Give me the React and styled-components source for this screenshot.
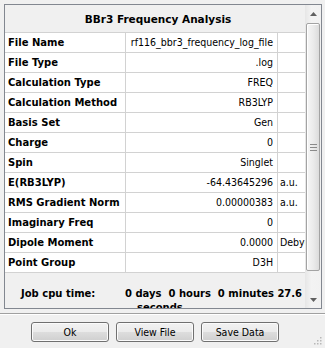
import React from 'react';
import styled, { createGlobalStyle } from 'styled-components';

const GlobalStyle = createGlobalStyle`
  html, body { margin: 0; padding: 0; background: #f0f0f0; }
  body { font-family: "DejaVu Sans", sans-serif; color: #000; }
`;

const Window = styled.div`
  position: relative;
  width: 325px;
  height: 348px;
  box-sizing: border-box;
  padding-top: 4px;
  background: #f0f0f0;
  display: flex;
  flex-direction: column;
  overflow: hidden;
`;

const Frame = styled.div`
  margin-left: 4px;
  width: 318px;
  height: 305px;
  box-sizing: border-box;
  border: 1px solid #828790;
  display: flex;
  background: #f0f0f0;
  flex-shrink: 0;
`;

const Content = styled.div`
  flex: 1;
  min-width: 0;
  display: flex;
  flex-direction: column;
  overflow: hidden;
`;

const Title = styled.div`
  height: 27px;
  flex-shrink: 0;
  border-bottom: 1px solid #d2d2d2;
  display: flex;
  align-items: center;
  justify-content: center;
  padding-left: 6px;
  font: bold 10.5px "DejaVu Sans", sans-serif;
`;

const Row = styled.div`
  display: grid;
  grid-template-columns: 121px 152px 27px;
  height: 20px;
  flex-shrink: 0;
  box-sizing: border-box;
  border-bottom: 1px solid #d2d2d2;
  background: #ffffff;
`;

const LabelCell = styled.div`
  border-right: 1px solid #d2d2d2;
  padding-left: 3px;
  font: bold 10px/19px "DejaVu Sans", sans-serif;
  white-space: nowrap;
  overflow: hidden;
`;

const ValueCell = styled.div`
  border-right: 1px solid #d2d2d2;
  padding-right: 4px;
  text-align: right;
  font: 10.5px/19px "DejaVu Sans Condensed", "DejaVu Sans", sans-serif;
  font-stretch: condensed;
  white-space: nowrap;
  overflow: hidden;
`;

const UnitCell = styled.div`
  padding-left: 2px;
  font: 10.5px/19px "DejaVu Sans Condensed", "DejaVu Sans", sans-serif;
  font-stretch: condensed;
  white-space: nowrap;
  overflow: hidden;
`;

const CpuArea = styled.div`
  flex: 1;
  display: flex;
  padding-top: 14px;
  overflow: hidden;
  font: bold 10px/14px "DejaVu Sans", sans-serif;
`;

const CpuLabel = styled.div`
  width: 120px;
  flex-shrink: 0;
  box-sizing: border-box;
  padding-left: 16px;
`;

const CpuValue = styled.div`
  width: 180px;
  flex-shrink: 0;
  box-sizing: border-box;
  padding-left: 12px;
  text-indent: -12px;
  white-space: pre-wrap;
`;

const Scrollbar = styled.div`
  width: 16px;
  flex-shrink: 0;
  display: flex;
  flex-direction: column;
  background: linear-gradient(to right, #e6e6e6, #f3f3f3 40%, #f1f1f1);
`;

const ArrowButton = styled.div`
  height: 17px;
  flex-shrink: 0;
  display: flex;
  align-items: center;
  justify-content: center;
`;

const Track = styled.div`
  flex: 1;
  display: flex;
  flex-direction: column;
`;

const Thumb = styled.div`
  margin: 1px 1px 0 1px;
  height: 248px;
  box-sizing: border-box;
  border: 1px solid #a3a3a3;
  border-radius: 2px;
  background: linear-gradient(to right, #f6f6f6, #ececec 50%, #dcdcdc);
  box-shadow: inset 1px 1px 0 #ffffff;
  display: flex;
  align-items: center;
  justify-content: center;
`;

const Separator = styled.div`
  margin-top: 4px;
  height: 0;
  border-top: 1px solid #a0a0a0;
  border-bottom: 1px solid #ffffff;
`;

const ButtonBar = styled.div`
  display: flex;
  gap: 7px;
  padding-left: 31px;
  margin-top: 7px;
`;

const Button = styled.button`
  width: 78px;
  height: 20px;
  padding: 0;
  box-sizing: border-box;
  border: 1px solid #707070;
  border-radius: 3px;
  background: linear-gradient(to bottom, #f2f2f2 0%, #ebebeb 48%, #dddddd 52%, #cfcfcf 100%);
  box-shadow: inset 0 0 0 1px #fbfbfb;
  font: 10.5px "DejaVu Sans Condensed", "DejaVu Sans", sans-serif;
  font-stretch: condensed;
  color: #000;
`;

const Grip = styled.svg`
  position: absolute;
  right: 3px;
  bottom: 3px;
`;

const rows = [
  ['File Name', 'rf116_bbr3_frequency_log_file', ''],
  ['File Type', '.log', ''],
  ['Calculation Type', 'FREQ', ''],
  ['Calculation Method', 'RB3LYP', ''],
  ['Basis Set', 'Gen', ''],
  ['Charge', '0', ''],
  ['Spin', 'Singlet', ''],
  ['E(RB3LYP)', '-64.43645296', 'a.u.'],
  ['RMS Gradient Norm', '0.00000383', 'a.u.'],
  ['Imaginary Freq', '0', ''],
  ['Dipole Moment', '0.0000', 'Debye'],
  ['Point Group', 'D3H', ''],
];

function UpArrow() {
  return (
    <svg width="7" height="4" viewBox="0 0 7 4">
      <path d="M0 4 L3.5 0 L7 4 Z" fill="#606060" />
    </svg>
  );
}

function DownArrow() {
  return (
    <svg width="7" height="4" viewBox="0 0 7 4">
      <path d="M0 0 L7 0 L3.5 4 Z" fill="#606060" />
    </svg>
  );
}

function GripLines() {
  return (
    <svg width="7" height="7" viewBox="0 0 7 7">
      <path d="M0 0.5 H7 M0 3.5 H7 M0 6.5 H7" stroke="#8a8a8a" strokeWidth="1" />
    </svg>
  );
}

export default function App() {
  return (
    <>
      <GlobalStyle />
      <Window>
        <Frame>
          <Content>
            <Title>BBr3 Frequency Analysis</Title>
            {rows.map(([label, value, unit]) => (
              <Row key={label}>
                <LabelCell>{label}</LabelCell>
                <ValueCell>{value}</ValueCell>
                <UnitCell>{unit}</UnitCell>
              </Row>
            ))}
            <CpuArea>
              <CpuLabel>Job cpu time:</CpuLabel>
              <CpuValue>{'0 days  0 hours  0 minutes 27.6 seconds.'}</CpuValue>
            </CpuArea>
          </Content>
          <Scrollbar>
            <ArrowButton><UpArrow /></ArrowButton>
            <Track>
              <Thumb><GripLines /></Thumb>
            </Track>
            <ArrowButton><DownArrow /></ArrowButton>
          </Scrollbar>
        </Frame>
        <Separator />
        <ButtonBar>
          <Button>Ok</Button>
          <Button>View File</Button>
          <Button>Save Data</Button>
        </ButtonBar>
        <Grip width="9" height="9" viewBox="0 0 9 9">
          {[[7, 1], [7, 4], [4, 4], [7, 7], [4, 7], [1, 7]].map(([x, y]) => (
            <rect key={`${x}-${y}`} x={x} y={y} width="1.5" height="1.5" fill="#b8b8b8" />
          ))}
        </Grip>
      </Window>
    </>
  );
}
